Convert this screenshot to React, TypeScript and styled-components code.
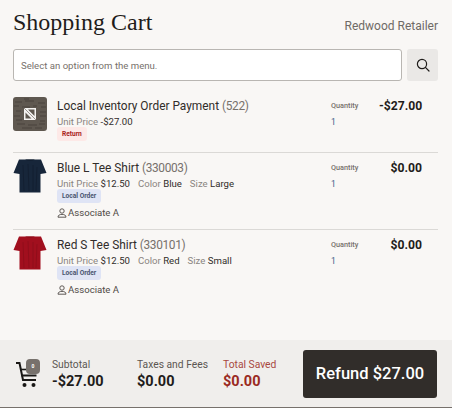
import React from 'react';
import styled, { createGlobalStyle } from 'styled-components';

const GlobalStyle = createGlobalStyle`
  html, body {
    margin: 0;
    padding: 0;
    background: #f9f7f5;
  }
  * {
    box-sizing: border-box;
  }
`;

const Page = styled.div`
  width: 452px;
  height: 408px;
  display: flex;
  flex-direction: column;
  overflow: hidden;
  background: #f9f7f5;
  color: #312d2a;
  font-family: Roboto, 'Open Sans', sans-serif;
`;

const Main = styled.div`
  flex: 1;
  padding: 0 14px 0 13px;
`;

const Header = styled.div`
  height: 49px;
  display: flex;
  align-items: center;
  justify-content: space-between;
`;

const Title = styled.h1`
  margin: 0 0 4px;
  font-family: 'Liberation Serif', 'DejaVu Serif', serif;
  font-size: 24px;
  font-weight: 400;
  color: #1f1c1a;
`;

const Retailer = styled.span`
  font-size: 12px;
  color: #6f6a66;
  margin-top: 2px;
`;

const SearchRow = styled.div`
  display: flex;
  gap: 5px;
  height: 32px;
`;

const SearchInput = styled.div`
  flex: 1;
  display: flex;
  align-items: center;
  padding: 0 7px;
  font-size: 9.6px;
  color: #77716c;
  background: #fff;
  border: 1px solid #b9b6b2;
  border-radius: 3px;
`;

const SearchButton = styled.div`
  width: 31px;
  display: flex;
  align-items: center;
  justify-content: center;
  background: #eae8e6;
  border-radius: 3px;
`;

const List = styled.div`
  margin-top: 16px;
`;

const Row = styled.div<{ $height: number }>`
  display: flex;
  height: ${(p) => p.$height}px;
  & + & {
    border-top: 1px solid #dbd9d6;
    padding-top: 6px;
  }
`;

const Thumb = styled.div`
  width: 34px;
  height: 34px;
  flex: none;
  margin-right: 10px;
`;

const Info = styled.div`
  flex: 1;
  min-width: 0;
`;

const Name = styled.div`
  font-size: 11.9px;
  line-height: 18px;
  color: #312d2a;
  white-space: nowrap;
`;

const Code = styled.span`
  letter-spacing: -0.35px;
  color: #77716c;
`;

const Attrs = styled.div`
  display: flex;
  gap: 8px;
  margin-top: 1px;
  font-size: 9.6px;
  line-height: 12px;
  color: #312d2a;
`;

const AttrLabel = styled.span`
  color: #8a8581;
`;

const Badge = styled.div<{ $tone: 'red' | 'blue' }>`
  width: fit-content;
  height: 14px;
  margin-top: -1px;
  padding: 0 5px;
  font-size: 6.6px;
  font-weight: 700;
  line-height: 14px;
  border-radius: 3px;
  color: ${(p) => (p.$tone === 'red' ? '#a8201a' : '#4a5570')};
  background: ${(p) => (p.$tone === 'red' ? '#fde9e7' : '#dfe4f5')};
`;

const Associate = styled.div`
  display: flex;
  align-items: center;
  gap: 1px;
  margin-top: 3px;
  font-size: 9.6px;
  line-height: 14px;
  color: #4f4a46;
`;

const QtyCol = styled.div`
  width: 48px;
  flex: none;
`;

const QtyLabel = styled.div`
  font-size: 7.3px;
  font-weight: 500;
  line-height: 18px;
  color: #77716c;
`;

const QtyValue = styled.div`
  margin-top: 1px;
  font-size: 8.5px;
  line-height: 12px;
  color: #3b5a8a;
`;

const Price = styled.div`
  width: 43px;
  flex: none;
  margin-right: 16px;
  text-align: right;
  font-size: 12.2px;
  font-weight: 700;
  line-height: 18px;
  color: #1f1c1a;
  white-space: nowrap;
`;

const Footer = styled.div`
  height: 68px;
  display: flex;
  align-items: center;
  padding: 0 15px 0 16px;
  background: #f0eeec;
  border-bottom: 1px solid #77716c;
`;

const CartWrap = styled.div`
  position: relative;
  width: 24px;
  height: 28px;
  margin-right: 12px;
`;

const CartBadge = styled.span`
  position: absolute;
  top: -1px;
  left: 10px;
  width: 14px;
  height: 15px;
  display: flex;
  align-items: center;
  justify-content: center;
  font-size: 5px;
  font-weight: 700;
  color: #fff;
  background: #77716c;
  border-radius: 4px;
`;

const Total = styled.div<{ $width: number; $saved?: boolean }>`
  width: ${(p) => p.$width}px;
  flex: none;
  padding-top: 2px;
  color: ${(p) => (p.$saved ? '#9a2a1f' : '#1f1c1a')};
`;

const TotalLabel = styled.div<{ $saved?: boolean }>`
  font-size: 10.3px;
  line-height: 14px;
  color: ${(p) => (p.$saved ? '#a8483f' : '#5b5652')};
  white-space: nowrap;
`;

const TotalValue = styled.div`
  font-size: 14.5px;
  font-weight: 700;
  line-height: 19px;
  white-space: nowrap;
`;

const RefundButton = styled.button`
  width: 134px;
  height: 48px;
  flex: none;
  margin-left: auto;
  padding: 0;
  border: none;
  border-radius: 3px;
  background: #312d2a;
  color: #fff;
  font-family: inherit;
  font-size: 16.5px;
  font-weight: 500;
`;

const SearchIcon = () => (
  <svg width="14" height="14" viewBox="0 0 14 14" fill="none" stroke="#1f1c1a" strokeWidth="1.2">
    <circle cx="6" cy="6" r="4.6" />
    <path d="M9.4 9.4 13 13" strokeLinecap="round" />
  </svg>
);

const NoImage = () => (
  <svg width="34" height="34" viewBox="0 0 34 34">
    <rect width="34" height="34" rx="3" fill="#5f5850" />
    <g stroke="#4a433d" strokeWidth="1">
      <path d="M2 5h7M12 4h9M25 6h7M1 9h5M9 10h8M20 9h4M28 10h5M3 14h5M27 15h6M1 19h6M27 19h6M3 23h6M27 24h5M4 27h8M15 28h9M26 27h6M9 31h10M22 31h7M11 2h5" />
    </g>
    <rect x="11" y="11" width="12" height="12" fill="#f4f2f0" />
    <path d="M15 12.5h6.5V19zM12.5 15.5 18.5 21.5h-6z" fill="#5f5850" />
    <path d="M10 10l14 14" stroke="#5f5850" strokeWidth="0.6" />
  </svg>
);

const Shirt: React.FC<{ color: string; shade: string }> = ({ color, shade }) => (
  <svg width="34" height="34" viewBox="0 0 34 34">
    <path
      d="M6 0.5 L28 0.5 L33.5 14 L27.5 15 L27.5 33.5 L6.5 33.5 L6.5 15 L0.5 14 Z"
      fill={color}
    />
    <path d="M12 0.5 Q17 3 22 0.5 Z" fill={shade} />
    <path d="M10 6 L11 32 M15 5 L16 32 M20 6 L20 32 M24 8 L23 32" stroke={shade} strokeWidth="0.8" fill="none" />
  </svg>
);

const PersonIcon = () => (
  <svg width="10" height="10" viewBox="0 0 10 10" fill="none" stroke="#4f4a46" strokeWidth="0.9">
    <circle cx="5" cy="3" r="2.2" />
    <path d="M1 9.2c0-2 1.6-2.8 4-2.8s4 .8 4 2.8z" />
  </svg>
);

const CartIcon = () => (
  <svg width="22" height="28" viewBox="0 0 22 28" fill="none" stroke="#1a1816" strokeWidth="2">
    <path d="M0 3h3.5l3.5 17h13" />
    <path d="M5.5 15.5h15" />
    <path d="M4.5 9.5h16" strokeWidth="1.6" />
    <circle cx="8.5" cy="25" r="2" fill="#1a1816" stroke="none" />
    <circle cx="17.5" cy="25" r="2" fill="#1a1816" stroke="none" />
  </svg>
);

const items = [
  {
    name: 'Blue L Tee Shirt',
    code: '(330003)',
    color: 'Blue',
    size: 'Large',
    fill: '#17263a',
    shade: '#111d2e',
  },
  {
    name: 'Red S Tee Shirt',
    code: '(330101)',
    color: 'Red',
    size: 'Small',
    fill: '#a10f1e',
    shade: '#8c0c19',
  },
];

const App: React.FC = () => (
  <Page>
    <GlobalStyle />
    <Main>
      <Header>
        <Title>Shopping Cart</Title>
        <Retailer>Redwood Retailer</Retailer>
      </Header>
      <SearchRow>
        <SearchInput>Select an option from the menu.</SearchInput>
        <SearchButton>
          <SearchIcon />
        </SearchButton>
      </SearchRow>
      <List>
        <Row $height={55}>
          <Thumb>
            <NoImage />
          </Thumb>
          <Info>
            <Name>
              Local Inventory Order Payment <Code>(522)</Code>
            </Name>
            <Attrs>
              <span>
                <AttrLabel>Unit Price</AttrLabel> -$27.00
              </span>
            </Attrs>
            <Badge $tone="red">Return</Badge>
          </Info>
          <QtyCol>
            <QtyLabel>Quantity</QtyLabel>
            <QtyValue>1</QtyValue>
          </QtyCol>
          <Price>-$27.00</Price>
        </Row>
        {items.map((item) => (
          <Row $height={77} key={item.code}>
            <Thumb>
              <Shirt color={item.fill} shade={item.shade} />
            </Thumb>
            <Info>
              <Name>
                {item.name} <Code>{item.code}</Code>
              </Name>
              <Attrs>
                <span>
                  <AttrLabel>Unit Price</AttrLabel> $12.50
                </span>
                <span>
                  <AttrLabel>Color</AttrLabel> {item.color}
                </span>
                <span>
                  <AttrLabel>Size</AttrLabel> {item.size}
                </span>
              </Attrs>
              <Badge $tone="blue">Local Order</Badge>
              <Associate>
                <PersonIcon />
                Associate A
              </Associate>
            </Info>
            <QtyCol>
              <QtyLabel>Quantity</QtyLabel>
              <QtyValue>1</QtyValue>
            </QtyCol>
            <Price>$0.00</Price>
          </Row>
        ))}
      </List>
    </Main>
    <Footer>
      <CartWrap>
        <CartIcon />
        <CartBadge>0</CartBadge>
      </CartWrap>
      <Total $width={85}>
        <TotalLabel>Subtotal</TotalLabel>
        <TotalValue>-$27.00</TotalValue>
      </Total>
      <Total $width={86}>
        <TotalLabel>Taxes and Fees</TotalLabel>
        <TotalValue>$0.00</TotalValue>
      </Total>
      <Total $width={60} $saved>
        <TotalLabel $saved>Total Saved</TotalLabel>
        <TotalValue>$0.00</TotalValue>
      </Total>
      <RefundButton>Refund $27.00</RefundButton>
    </Footer>
  </Page>
);

export default App;
